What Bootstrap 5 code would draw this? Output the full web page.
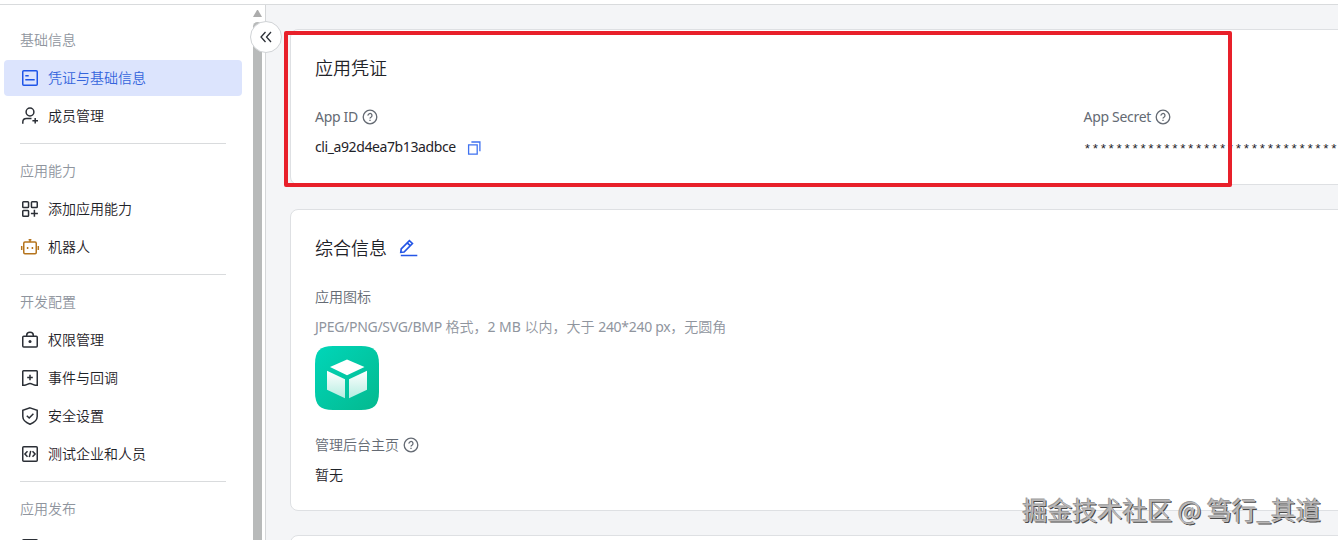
<!DOCTYPE html>
<html lang="zh-CN">
<head>
  <meta charset="UTF-8" />
  <meta name="viewport" content="width=device-width, initial-scale=1.0"/>
  <title>凭证与基础信息</title>
  <link href="https://cdn.jsdelivr.net/npm/bootstrap@5.3.0/dist/css/bootstrap.min.css" rel="stylesheet">
  <style>
    body {
      height: 540px;
      font-family: 'Noto Sans', 'Noto Sans CJK SC DemiLight', 'Noto Sans CJK SC', sans-serif;
      font-size: 14px;
      line-height: 22px;
      color: #1f2329;
      background-color: #fff;
    }
    svg {
      display: block;
      flex-shrink: 0;
      fill: none;
      stroke: currentColor;
      stroke-width: 1.5;
    }
    .topbar {
      height: 5px;
      border-bottom: 1px solid #d9dbdd;
    }
    .sidebar {
      width: 266px;
      border-right: 1px solid #d5d7d9;
    }
    .side-menu {
      width: 253px;
      padding-top: 24px;
    }
    .side-title {
      padding-left: 20px;
      margin-bottom: 9px;
      color: #8f959e;
    }
    .side-item {
      width: 238px;
      height: 36px;
      margin: 0 0 2px 4px;
      padding-left: 16px;
      gap: 8px;
      color: #1f2329;
      border-radius: 4px;
      text-decoration: none;
    }
    .side-item.active {
      background-color: #dce4fd;
      color: #3565dc;
    }
    .side-item.active svg {
      color: #1f55e8;
    }
    .side-item svg {
      color: #2b2f36;
    }
    .side-item.bot svg {
      color: #b5741d;
    }
    .side-line {
      width: 206px;
      height: 1px;
      margin: 9px 0 16px 20px;
      background-color: #d9dbdd;
    }
    .scroll-track {
      width: 9px;
      padding-top: 5px;
    }
    .scroll-up {
      border: 4.5px solid transparent;
      border-top: 0;
      border-bottom: 7px solid #acacac;
    }
    .scroll-thumb {
      margin-top: 5px;
      border-radius: 5px 5px 0 0;
      background-color: #b8baba;
    }
    .fold-btn {
      left: 250px;
      top: 21px;
      width: 32px;
      height: 32px;
      border: 1px solid #d0d3d6;
      background-color: #fff;
      z-index: 3;
    }
    .fold-btn svg {
      color: #2b2f36;
      stroke-width: 1.3;
    }
    .page-main {
      padding: 24px 0 0 24px;
      background-color: #f4f5f7;
    }
    /* cards are wider than the window and run off its right side */
    .panel {
      width: 1587px;
      margin-bottom: 24px;
      padding: 24px;
      border: 1px solid #dee0e3;
      border-radius: 8px;
      background-color: #fff;
    }
    .panel-title {
      font-size: 18px;
      line-height: 28px;
      font-weight: 400;
    }
    .label-text {
      color: #646a73;
    }
    .label-text svg {
      stroke-width: 1.3;
    }
    .value-row {
      height: 24px;
    }
    .hint {
      color: #8f959e;
    }
    .latin {
      letter-spacing: -.4px;
    }
    .label-text .latin,
    .hint .latin {
      letter-spacing: -.3px;
    }
    .icon-blue {
      color: #2456e6;
      stroke-width: 1.7;
    }
    .copy-icon {
      margin-left: 7px;
      stroke-width: 1.3;
      color: #3f72f0;
    }
    .secret {
      padding-top: 3px;
      font-family: 'Liberation Mono', monospace;
      font-size: 13px;
      letter-spacing: .15px;
    }
    .highlight-box {
      left: 284px;
      top: 31px;
      width: 948px;
      height: 156px;
      border: 4px solid #e8202a;
      border-radius: 2px;
      z-index: 2;
    }
    .watermark {
      right: 17px;
      bottom: 13px;
      font-family: 'Noto Sans CJK SC DemiLight', 'Noto Sans CJK SC', sans-serif;
      font-size: 25px;
      line-height: 36px;
      color: #b9b7b7;
      text-shadow: -1px -1px 0 #9a9a9a, 1px 1px 0 #4a4a4a;
      z-index: 4;
    }
  </style>
</head>

<body class="d-flex flex-column overflow-hidden position-relative">
  <svg class="d-none">
    <symbol id="i-help" viewBox="0 0 16 16">
      <circle cx="8" cy="8" r="6.8"/>
      <path d="M6 6.6a2 2 0 1 1 3 1.6c-.7.4-1 .7-1 1.4M8 10.7v1.3"/>
    </symbol>
  </svg>

  <div class="topbar flex-shrink-0"></div>

  <div class="d-flex flex-grow-1 overflow-hidden">
    <aside class="sidebar d-flex flex-shrink-0 overflow-hidden">
      <nav class="side-menu flex-shrink-0">
        <div class="side-title">基础信息</div>
        <a class="side-item active d-flex align-items-center" href="#">
          <svg width="20" height="20" viewBox="0 0 20 20"><rect x="2.75" y="2.75" width="14.5" height="14.5" rx="1"/><path d="M5.3 7.8h3.4M5.3 11.8h9.4"/></svg>
          凭证与基础信息
        </a>
        <a class="side-item d-flex align-items-center" href="#">
          <svg width="20" height="20" viewBox="0 0 20 20"><circle cx="10" cy="6" r="3.9"/><path d="M2.8 17.8v-1.6c0-2.2 1.5-3.6 3.7-3.6h5M15.2 12v5.6M12.4 14.8H18"/></svg>
          成员管理
        </a>
        <div class="side-line"></div>

        <div class="side-title">应用能力</div>
        <a class="side-item d-flex align-items-center" href="#">
          <svg width="20" height="20" viewBox="0 0 20 20"><rect x="2.75" y="2.75" width="5.8" height="5.8" rx=".8"/><rect x="11.45" y="2.75" width="5.8" height="5.8" rx=".8"/><rect x="2.75" y="11.45" width="5.8" height="5.8" rx=".8"/><path d="M14.4 10.8v7M10.9 14.4h7"/></svg>
          添加应用能力
        </a>
        <a class="side-item bot d-flex align-items-center" href="#">
          <svg width="20" height="20" viewBox="0 0 20 20"><rect x="3.75" y="4.95" width="12.5" height="11.8" rx="1.2"/><path d="M10 5V2.2M8.6 2.7h2.8M1.7 9v4M18.3 9v4M7.6 10v2M12.4 10v2"/></svg>
          机器人
        </a>
        <div class="side-line"></div>

        <div class="side-title">开发配置</div>
        <a class="side-item d-flex align-items-center" href="#">
          <svg width="20" height="20" viewBox="0 0 20 20"><rect x="2.75" y="6.25" width="14.5" height="10.7" rx="1"/><path d="M6.7 6v-.7a3.3 3 0 0 1 6.6 0V6"/><circle cx="10" cy="11.5" r="1.5" fill="currentColor" stroke="none"/></svg>
          权限管理
        </a>
        <a class="side-item d-flex align-items-center" href="#">
          <svg width="20" height="20" viewBox="0 0 20 20"><path d="M3.500 2.750h13a.75.75 0 0 1 .75.75v13.700H15.500C13.500 17.200 12 15.600 10 15.600S6.500 17.200 4.500 17.200H2.750V3.500a.75.75 0 0 1 .75-.75zM10 6.700v5.600M7.200 9.500h5.600"/></svg>
          事件与回调
        </a>
        <a class="side-item d-flex align-items-center" href="#">
          <svg width="20" height="20" viewBox="0 0 20 20"><path d="M10 1.900l7.200 2.500v6.200c0 3.400-3 6-7.200 7.600-4.200-1.600-7.200-4.200-7.200-7.600V4.400zM6.800 9.700l2.400 2.300 4.200-4.200"/></svg>
          安全设置
        </a>
        <a class="side-item d-flex align-items-center" href="#">
          <svg width="20" height="20" viewBox="0 0 20 20"><rect x="2.75" y="2.75" width="14.5" height="14.5" rx="1"/><path d="M7.500 7.200L4.900 10l2.600 2.800M12.500 7.200l2.600 2.800-2.600 2.800M10.700 6.800l-1.400 6.400"/></svg>
          测试企业和人员
        </a>
        <div class="side-line"></div>

        <div class="side-title">应用发布</div>
        <a class="side-item d-flex align-items-center" href="#">
          <svg width="20" height="20" viewBox="0 0 20 20"><rect x="2.75" y="2.75" width="14.5" height="14.5" rx="1"/></svg>
        </a>
      </nav>
      <div class="scroll-track d-flex flex-column">
        <div class="scroll-up"></div>
        <div class="scroll-thumb flex-grow-1"></div>
      </div>
    </aside>

    <main class="page-main flex-grow-1 overflow-hidden">
      <section class="panel">
        <h2 class="panel-title mb-4">应用凭证</h2>
        <div class="row g-0">
          <div class="col-6">
            <div class="label-text d-flex align-items-center gap-1 mb-2"><span class="latin">App ID</span><svg width="16" height="16"><use href="#i-help"/></svg></div>
            <div class="value-row d-flex align-items-start">
              <span class="latin">cli_a92d4ea7b13adbce</span>
              <svg class="copy-icon mt-1" width="20" height="18" viewBox="0 0 20 18"><path d="M5.600 4.800h8.600v9.400H5.600zM8.400 2h8.500v9.300"/></svg>
            </div>
          </div>
          <div class="col-6">
            <div class="label-text d-flex align-items-center gap-1 mb-2"><span class="latin">App Secret</span><svg width="16" height="16"><use href="#i-help"/></svg></div>
            <div class="value-row secret">********************************</div>
          </div>
        </div>
      </section>

      <section class="panel">
        <div class="d-flex align-items-center mb-4">
          <h2 class="panel-title mb-0">综合信息</h2>
          <svg class="icon-blue ms-2" width="24" height="24" viewBox="0 0 24 24"><path d="M5.800 16.300l.4-3.300 8.200-8.400 3 2.900-8.300 8.500zM12.300 6.900l2.900 2.800M5.800 19.500h16.500"/></svg>
        </div>
        <div class="label-text mb-2">应用图标</div>
        <div class="hint mb-2"><span class="latin">JPEG/PNG/SVG/BMP</span> 格式，2 MB 以内，大于 <span class="latin">240*240 px</span>，无圆角</div>
        <svg width="64" height="64" viewBox="0 0 64 64">
          <defs>
            <linearGradient id="bg" x1="0" y1="0" x2="1" y2="1"><stop offset="0" stop-color="#00d6b9"/><stop offset="1" stop-color="#04b98f"/></linearGradient>
            <linearGradient id="side" x1="0" y1="0" x2="0" y2="1"><stop offset="0" stop-color="#fff"/><stop offset="1" stop-color="#b5ede1"/></linearGradient>
          </defs>
          <path d="M18 0h28C59 0 64 5 64 18v28c0 13-5 18-18 18H18C5 64 0 59 0 46V18C0 5 5 0 18 0z" fill="url(#bg)" stroke="none"/>
          <path d="M32 13.500l17.500 7.600L32 29.300l-17-8.200z" fill="#fff" stroke="none"/>
          <path d="M12 24.800l18 8.500v19L12 43.800zM52 24.800l-18 8.500v19l18-8.500z" fill="url(#side)" stroke="none"/>
        </svg>
        <div class="label-text d-flex align-items-center gap-1 mt-4 mb-2">管理后台主页<svg width="16" height="16"><use href="#i-help"/></svg></div>
        <div>暂无</div>
      </section>

      <section class="panel"></section>
    </main>
  </div>

  <button class="fold-btn btn p-0 rounded-circle position-absolute d-flex align-items-center justify-content-center" type="button" aria-label="收起">
    <svg width="16" height="16" viewBox="0 0 16 16"><path d="M7.500 3L3 8l4.500 5M13 3L8.500 8l4.500 5"/></svg>
  </button>
  <div class="highlight-box position-absolute"></div>
  <div class="watermark position-absolute text-nowrap">掘金技术社区 @ 笃行_其道</div>

  <script src="https://cdn.jsdelivr.net/npm/bootstrap@5.3.0/dist/js/bootstrap.bundle.min.js"></script>
</body>
</html>
